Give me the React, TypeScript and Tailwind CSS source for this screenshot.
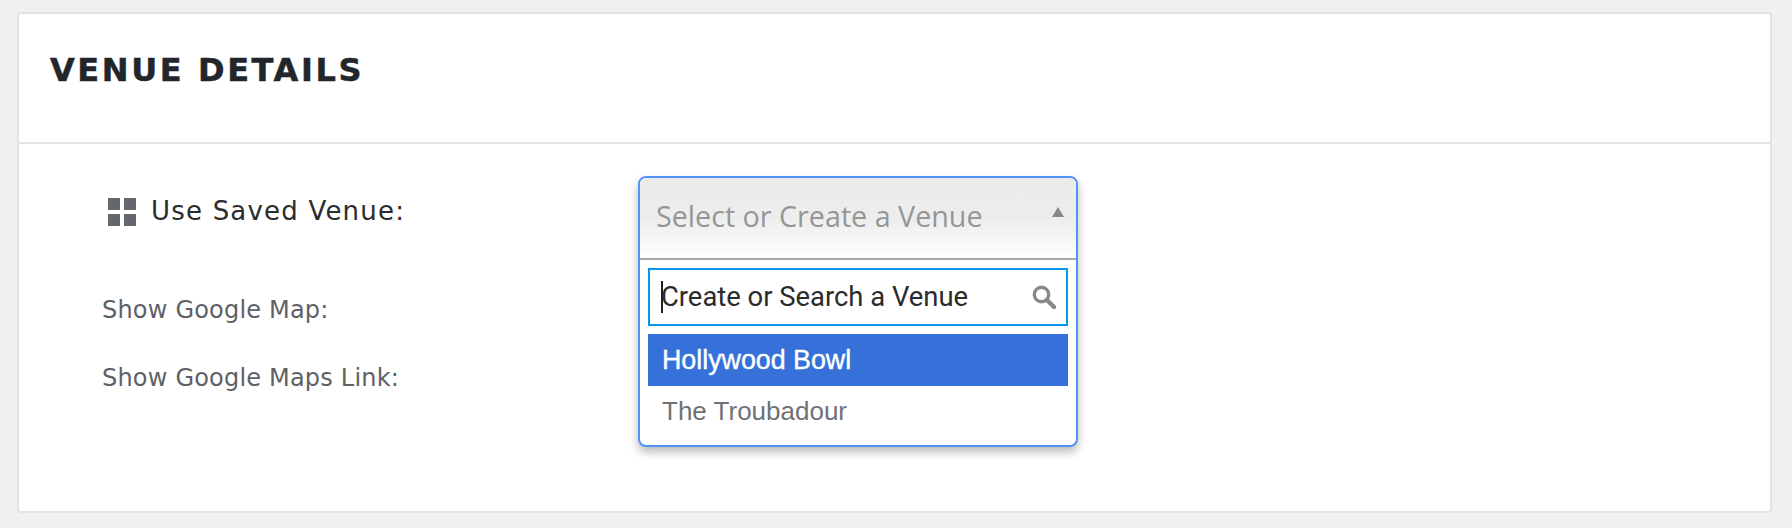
function GridIcon() {
  return (
    <div className="grid grid-cols-2 gap-1 w-7 h-7 shrink-0 mt-px">
      <span className="bg-[#64676c]" />
      <span className="bg-[#64676c]" />
      <span className="bg-[#64676c]" />
      <span className="bg-[#64676c]" />
    </div>
  );
}

function SearchGlyph() {
  return (
    <svg viewBox="0 0 24 24" className="w-6 h-6 shrink-0 text-[#888888]" fill="none" stroke="currentColor">
      <circle cx="9.5" cy="9.5" r="7.2" strokeWidth="3.4" />
      <line x1="15" y1="15" x2="22" y2="22" strokeWidth="4.4" strokeLinecap="round" />
    </svg>
  );
}

function VenueSelect() {
  return (
    <div className="w-[440px] h-[271px] rounded-lg border-2 border-[#5391fb] bg-white shadow-[0_5px_10px_rgba(0,0,0,0.28)] overflow-hidden">
      <div className="h-[82px] pl-[16px] pr-[12px] pt-[19px] flex items-start justify-between border-b-2 border-[#a9a9a9] bg-gradient-to-b from-[#ebebeb] via-[#ededed] to-white">
        <span className="text-[28.7px] leading-[38px] text-[#969696] font-['Open_Sans',sans-serif]">Select or Create a Venue</span>
        <span className="mt-[10px] w-0 h-0 border-x-[6px] border-x-transparent border-b-[10px] border-b-[#888888]" />
      </div>
      <div className="px-2 pt-2">
        <div className="h-[58px] border-2 border-[#0696e8] flex items-center pl-[11px] pr-[10px]">
          <span className="w-0.5 h-8 bg-[#222222] shrink-0" />
          <span className="flex-1 -ml-0.5 text-[27.4px] leading-8 text-[#2b2b2b] font-['Roboto',sans-serif]">Create or Search a Venue</span>
          <SearchGlyph />
        </div>
        <div className="mt-2 h-[52px] bg-[#3571d8] px-[14px] flex items-center text-[26.8px] text-white [-webkit-text-stroke:0.4px_white] font-['Liberation_Sans',sans-serif]">Hollywood Bowl</div>
        <div className="h-[50px] px-[14px] flex items-center text-[26px] text-[#6e7276] font-['Liberation_Sans',sans-serif]">The Troubadour</div>
      </div>
    </div>
  );
}

export default function App() {
  return (
    <div className="h-[528px] bg-[#f0f0f0] pt-3 pl-[17px] pr-[20px] font-['DejaVu_Sans',sans-serif]">
      <section className="h-[501px] bg-white border-2 border-[#e2e2e2] rounded">
        <header className="h-[130px] border-b-2 border-[#e2e2e2] pl-[31px] pt-[36px]">
          <h2 className="text-[32px] leading-10 font-bold tracking-[2.6px] text-[#22262b] [-webkit-text-stroke:0.5px_#22262b]">VENUE DETAILS</h2>
        </header>
        <div className="flex pt-[32px]">
          <div className="w-[619px] pl-[83px] shrink-0">
            <div className="flex items-center gap-[15px] pl-[6px] pt-[20px] h-[50px]">
              <GridIcon />
              <span className="text-[26px] tracking-[1.2px] text-[#2c2c2c]">Use Saved Venue:</span>
            </div>
            <p className="mt-[66px] text-[24px] leading-9 tracking-[0.2px] text-[#5e6167]">Show Google Map:</p>
            <p className="mt-[32px] text-[24px] leading-9 tracking-[0.2px] text-[#5e6167]">Show Google Maps Link:</p>
          </div>
          <VenueSelect />
        </div>
      </section>
    </div>
  );
}
